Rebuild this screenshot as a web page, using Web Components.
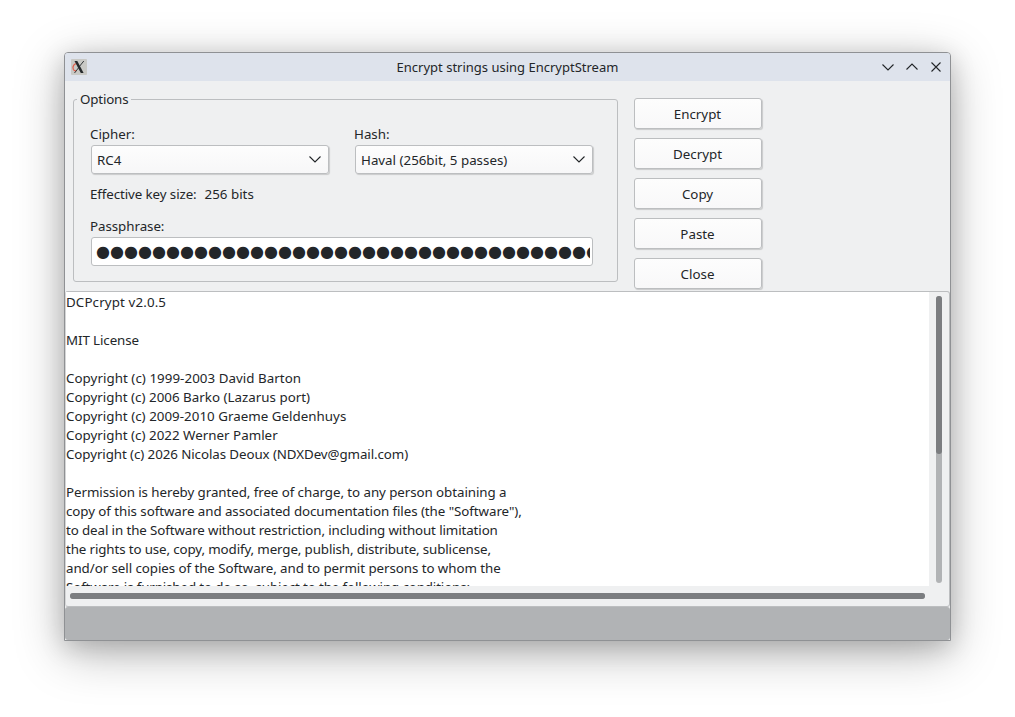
<!DOCTYPE html>
<html lang="en">
<head>
<meta charset="utf-8">
<title>Encrypt strings using EncryptStream</title>
<style>
  html, body { margin: 0; height: 100%; }
  body {
    box-sizing: border-box;
    padding: 52px 64px 76px;
    background: #fff;
    color: #232629;
    font: 13.333px/19px "Noto Sans", "Open Sans", sans-serif;
    overflow: hidden;
  }

  /* slotted layout of the form */
  .top { display: flex; height: 210px; box-sizing: border-box; padding: 9px 0 0 8px; }
  .pair { display: flex; gap: 25px; }
  .info { display: flex; gap: 8px; margin-top: 11px; }
  .info span:first-child { letter-spacing: -.09px; }
  .actions { display: flex; flex-direction: column; gap: 9px; margin: 8px 0 0 16px; }
</style>
</head>
<body>
<app-window caption="Encrypt strings using EncryptStream">
  <div class="top">
    <group-box caption="Options">
      <div class="pair">
        <combo-box label="Cipher:">RC4</combo-box>
        <combo-box label="Hash:">Haval (256bit, 5 passes)</combo-box>
      </div>
      <div class="info"><span>Effective key size:</span><span>256 bits</span></div>
      <pass-field label="Passphrase:" length="36"></pass-field>
    </group-box>
    <div class="actions">
      <push-button>Encrypt</push-button>
      <push-button>Decrypt</push-button>
      <push-button>Copy</push-button>
      <push-button>Paste</push-button>
      <push-button>Close</push-button>
    </div>
  </div>
  <memo-view>
    <memo-line tracking=".13">DCPcrypt v2.0.5</memo-line>
    <memo-line></memo-line>
    <memo-line tracking="-.09">MIT License</memo-line>
    <memo-line></memo-line>
    <memo-line tracking=".05">Copyright (c) 1999-2003 David Barton</memo-line>
    <memo-line tracking=".02">Copyright (c) 2006 Barko (Lazarus port)</memo-line>
    <memo-line tracking=".03">Copyright (c) 2009-2010 Graeme Geldenhuys</memo-line>
    <memo-line tracking=".02">Copyright (c) 2022 Werner Pamler</memo-line>
    <memo-line tracking="-.08">Copyright (c) 2026 Nicolas Deoux (NDXDev@gmail.com)</memo-line>
    <memo-line></memo-line>
    <memo-line tracking="-.065">Permission is hereby granted, free of charge, to any person obtaining a</memo-line>
    <memo-line tracking="-.06">copy of this software and associated documentation files (the "Software"),</memo-line>
    <memo-line tracking="-.105">to deal in the Software without restriction, including without limitation</memo-line>
    <memo-line tracking="-.12">the rights to use, copy, modify, merge, publish, distribute, sublicense,</memo-line>
    <memo-line tracking="-.06">and/or sell copies of the Software, and to permit persons to whom the</memo-line>
    <memo-line tracking="-.125">Software is furnished to do so, subject to the following conditions:</memo-line>
  </memo-view>
</app-window>

<script>
const define = (name, html, setup) => {
  const template = document.createElement('template');
  template.innerHTML = html;

  customElements.define(name, class extends HTMLElement {
    constructor() {
      super();
      this.attachShadow({mode: 'open'}).appendChild(template.content.cloneNode(true));
      if (setup) setup(this, this.shadowRoot);
    }
  });
};

const setText = (part, attr) => (host, root) => {
  root.querySelector(part).textContent = host.getAttribute(attr);
};

define('app-window', `
  <style>
    :host {
      display: flex;
      flex-direction: column;
      box-sizing: border-box;
      width: 887px;
      height: 589px;
      border: 1px solid #8f9194;
      border-radius: 4px 4px 0 0;
      background: #eff0f1;
      box-shadow: 0 12px 50px rgba(0,0,0,.28), 0 6px 24px rgba(0,0,0,.17);
      overflow: hidden;
    }
    header {
      display: grid;
      grid-template-columns: 80px 1fr 80px;
      align-items: center;
      height: 28px;
      flex: none;
      background: #dee3ec;
    }
    header > svg { margin-left: 6px; }
    .title { text-align: center; padding-top: 1px; font-size: 13px; }
    .controls { display: flex; gap: 8px; justify-content: flex-end; padding-right: 6px; }
    .controls svg { fill: none; stroke: #232629; stroke-width: 1.1; }
    footer { flex: 1; background: #b1b3b5; border-radius: 3px; }
  </style>
  <header>
    <svg width="16" height="16" viewBox="0 0 16 16">
      <rect width="16" height="16" rx="1" fill="#c9c9c5"/>
      <path d="M6.5 4.8C3.5 4 1 7.5 2.300 10.200c.8 1.500 2 1.800 3 1.400" fill="none" stroke="#e0604e" stroke-width="1.300"/>
      <path d="M12.800 2 8.600 7.200M7.400 9 3.500 14" stroke="#34383a" stroke-width="1"/>
      <path d="M3.500 2h2.800l6.300 12H9.800z" fill="#25292b"/>
    </svg>
    <div class="title"></div>
    <div class="controls">
      <svg width="16" height="16"><path d="m2.500 5.500 5.500 5.500 5.500-5.500"/></svg>
      <svg width="16" height="16"><path d="m2.500 10.500 5.500-5.500 5.500 5.500"/></svg>
      <svg width="16" height="16"><path d="m3.500 3.500 9 9m0-9-9 9"/></svg>
    </div>
  </header>
  <slot></slot>
  <footer></footer>
`, setText('.title', 'caption'));

define('group-box', `
  <style>
    :host { display: block; width: 545px; height: 192px; }
    fieldset {
      box-sizing: border-box;
      height: 192px;
      margin: 0;
      min-width: 0;
      border: 1px solid #bcbec0;
      border-radius: 3px;
      padding: 16px 16px 0;
    }
    legend { margin-left: -13px; padding: 0 3px; letter-spacing: -.17px; }
  </style>
  <fieldset><legend></legend><slot></slot></fieldset>
`, setText('legend', 'caption'));

define('combo-box', `
  <style>
    :host { display: block; width: 239px; }
    .box {
      display: flex;
      align-items: center;
      justify-content: space-between;
      box-sizing: border-box;
      height: 29px;
      margin: 1px 0 0 1px;
      padding: 1px 5px 0;
      border: 1px solid #bcbec0;
      border-radius: 3px;
      background: linear-gradient(#fdfdfd, #f7f7f8);
      box-shadow: 1px 1px 1px rgba(0,0,0,.16);
    }
    svg { fill: none; stroke: #232629; stroke-width: 1.1; }
  </style>
  <div class="label"></div>
  <div class="box"><slot></slot><svg width="16" height="16"><path d="m2.500 4.500 5.500 5.500 5.500-5.500"/></svg></div>
`, setText('.label', 'label'));

define('pass-field', `
  <style>
    :host { display: block; margin-top: 13px; }
    .label { letter-spacing: -.05px; }
    .box {
      display: flex;
      align-items: center;
      box-sizing: border-box;
      width: 502px;
      height: 29px;
      margin: 1px 0 0 1px;
      padding: 0 2px 0 4px;
      border: 1px solid #bcbec0;
      border-radius: 3px;
      background: #fff;
    }
    .dots {
      flex: 1;
      min-width: 0;
      overflow: hidden;
      white-space: nowrap;
      font: 16.060px/27px "DejaVu Sans", sans-serif;
    }
  </style>
  <div class="label"></div>
  <div class="box"><div class="dots"></div></div>
`, (host, root) => {
  root.querySelector('.label').textContent = host.getAttribute('label');
  root.querySelector('.dots').textContent = '●'.repeat(host.getAttribute('length'));
});

define('push-button', `
  <style>
    :host {
      display: flex;
      align-items: center;
      justify-content: center;
      box-sizing: border-box;
      width: 128px;
      height: 31px;
      padding: 1px 1px 0 0;
      border: 1px solid #bcbec0;
      border-radius: 3px;
      background: linear-gradient(#fdfdfd, #f8f8f9);
      box-shadow: 1px 1px 1px rgba(0,0,0,.16);
    }
  </style>
  <slot></slot>
`);

define('memo-view', `
  <style>
    :host {
      display: grid;
      grid-template: 294px 20px / 1fr 20px;
      flex: none;
      box-sizing: border-box;
      width: 885px;
      height: 316px;
      border: 1px solid #bcbec0;
      border-left-color: #d4d5d6;
      border-radius: 3px;
    }
    .text {
      padding-top: 1px;
      overflow: hidden;
      background: #fff;
    }
    .track { border-radius: 3px; background: #b1b3b5; }
    .thumb { border-radius: 3px; background: #7b7d80; }
    .v { width: 6px; height: 287px; margin: 4px 0 0 7px; }
    .v .thumb { height: 158px; }
    .h { width: 855px; height: 6px; margin: 7px 0 0 4px; }
    .h .thumb { height: 6px; }
  </style>
  <div class="text"><slot></slot></div>
  <div class="track v"><div class="thumb"></div></div>
  <div class="track h"><div class="thumb"></div></div>
`);

define('memo-line', `
  <style>
    :host { display: block; height: 19px; white-space: nowrap; }
    span { letter-spacing: var(--tracking); }
  </style>
  <span><slot></slot></span>
`, (host, root) => {
  const tracking = host.getAttribute('tracking') || 0;
  root.querySelector('span').style.setProperty('--tracking', `${tracking}px`);
});
</script>
</body>
</html>
